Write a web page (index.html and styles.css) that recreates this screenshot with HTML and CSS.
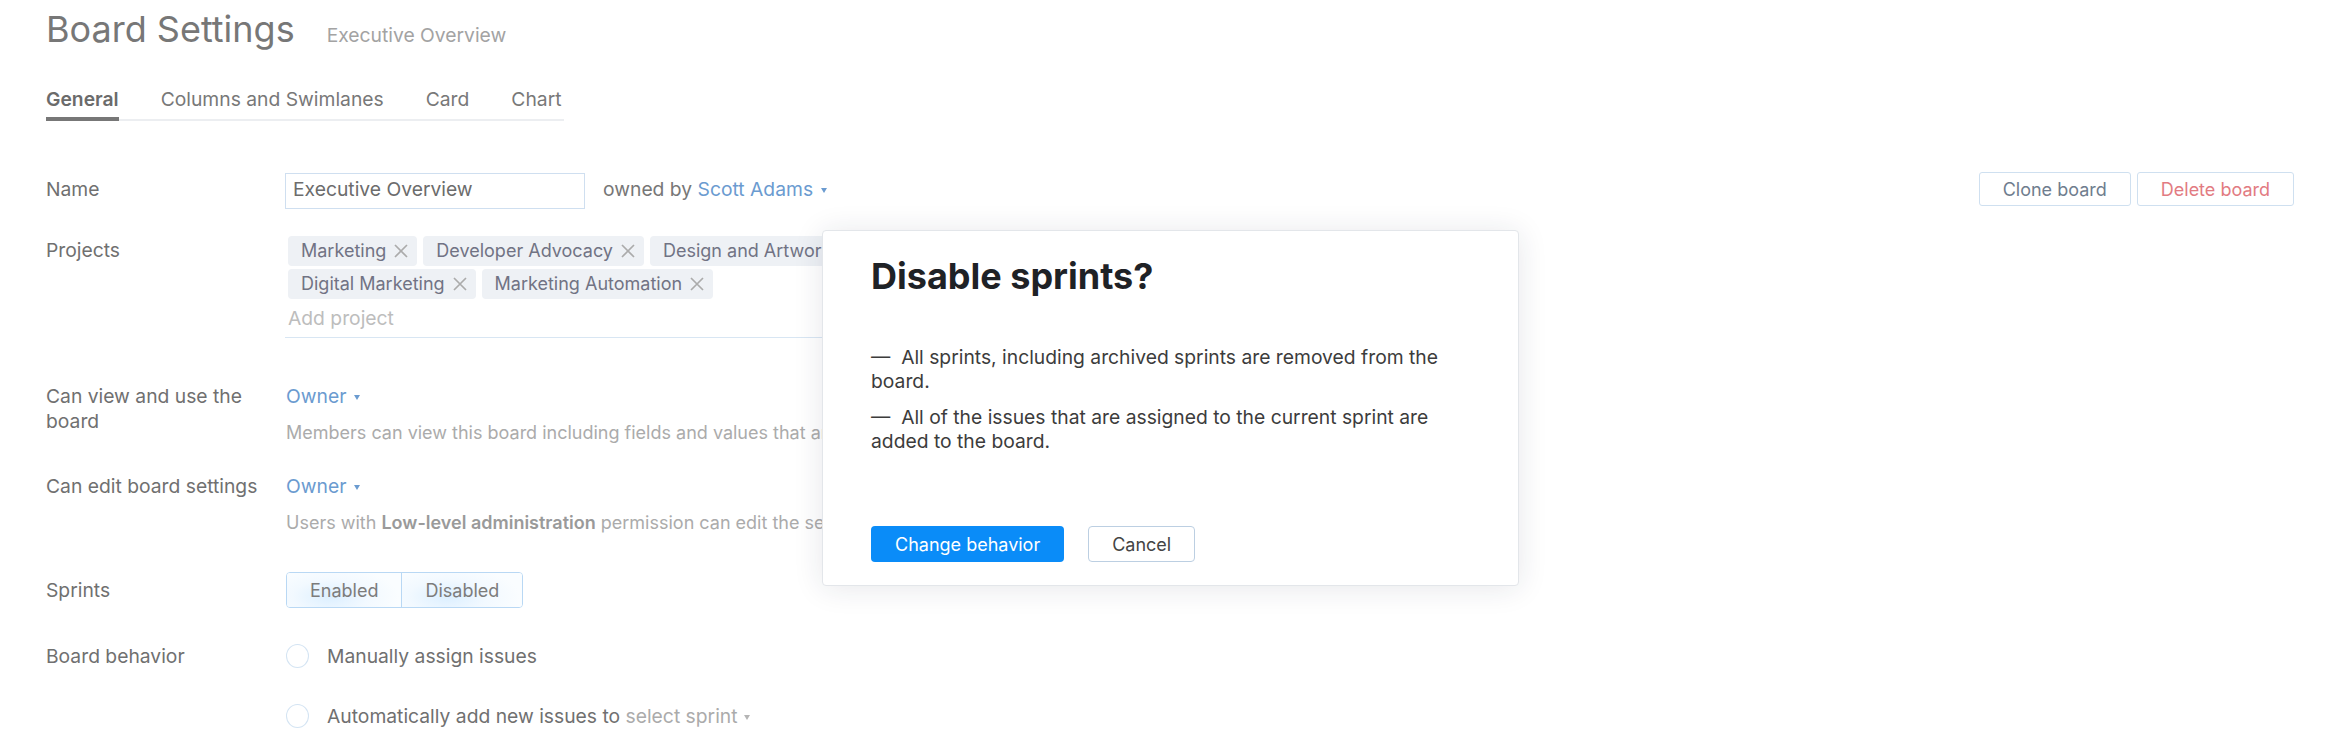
FILE: index.html
```html
<!DOCTYPE html>
<html lang="en">
<head>
<meta charset="utf-8">
<title>Board Settings</title>
<link rel="stylesheet" href="styles.css">
</head>
<body>
<div class="page">
  <header class="head">
    <h1 class="title">Board Settings</h1>
    <span class="subtitle">Executive Overview</span>
  </header>

  <nav class="tabs">
    <span class="tab tab-active">General</span>
    <span class="tab">Columns and Swimlanes</span>
    <span class="tab">Card</span>
    <span class="tab">Chart</span>
  </nav>

  <div class="form">
    <div class="row row-name">
      <div class="label">Name</div>
      <div class="value name-value">
        <input class="name-input" type="text" value="Executive Overview">
        <span class="owned">owned by <span class="link">Scott Adams<span class="caret"></span></span></span>
        <div class="actions">
          <button class="btn">Clone board</button>
          <button class="btn btn-danger">Delete board</button>
        </div>
      </div>
    </div>

    <div class="row row-projects">
      <div class="label">Projects</div>
      <div class="value">
        <div class="projects">
          <div class="chips">
            <span class="chip">Marketing<svg class="chip-x" viewBox="0 0 16 16"><path d="M2 2L14 14M14 2L2 14"/></svg></span>
            <span class="chip">Developer Advocacy<svg class="chip-x" viewBox="0 0 16 16"><path d="M2 2L14 14M14 2L2 14"/></svg></span>
            <span class="chip">Design and Artwork<svg class="chip-x" viewBox="0 0 16 16"><path d="M2 2L14 14M14 2L2 14"/></svg></span>
            <span class="chip">Digital Marketing<svg class="chip-x" viewBox="0 0 16 16"><path d="M2 2L14 14M14 2L2 14"/></svg></span>
            <span class="chip">Marketing Automation<svg class="chip-x" viewBox="0 0 16 16"><path d="M2 2L14 14M14 2L2 14"/></svg></span>
          </div>
          <div class="add-project">Add project</div>
        </div>
      </div>
    </div>

    <div class="row row-view">
      <div class="label">Can view and use the board</div>
      <div class="value">
        <div><span class="link">Owner<span class="caret"></span></span></div>
        <div class="hint">Members can view this board including fields and values that are</div>
      </div>
    </div>

    <div class="row row-edit">
      <div class="label">Can edit board settings</div>
      <div class="value">
        <div><span class="link">Owner<span class="caret"></span></span></div>
        <div class="hint">Users with <b>Low-level administration</b> permission can edit the settings for this board.</div>
      </div>
    </div>

    <div class="row row-sprints">
      <div class="label">Sprints</div>
      <div class="value">
        <div class="segmented">
          <button class="seg seg-first">Enabled</button>
          <button class="seg">Disabled</button>
        </div>
      </div>
    </div>

    <div class="row row-behavior">
      <div class="label">Board behavior</div>
      <div class="value options">
        <label class="option"><span class="radio"></span>Manually assign issues</label>
        <label class="option"><span class="radio"></span>Automatically add new issues to <span class="muted">select sprint<span class="caret caret-grey"></span></span></label>
      </div>
    </div>
  </div>

  <div class="dialog">
    <h2 class="dialog-title">Disable sprints?</h2>
    <div class="dialog-body">
      <p>—&nbsp; All sprints, including archived sprints are removed from the board.</p>
      <p>—&nbsp; All of the issues that are assigned to the current sprint are added to the board.</p>
    </div>
    <div class="dialog-actions">
      <button class="btn-primary">Change behavior</button>
      <button class="btn-cancel">Cancel</button>
    </div>
  </div>
</div>
</body>
</html>
```

FILE: styles.css
```css
* { box-sizing: border-box; }

body {
  margin: 0;
  background: #ffffff;
  font-family: Inter, "Noto Sans", "Liberation Sans", sans-serif;
  color: #707070;
}

.page {
  position: relative;
  height: 746px;
  overflow: hidden;
  padding: 7px 48px 0 46px;
}

/* Header */
.head {
  display: flex;
  align-items: baseline;
  gap: 32px;
}
.title {
  margin: 0;
  font-size: 36px;
  line-height: 44px;
  font-weight: 400;
  color: #777777;
}
.subtitle {
  font-size: 19.3px;
  color: #a3a3a3;
}

/* Tabs */
.tabs {
  display: inline-flex;
  gap: 42px;
  margin-top: 36px;
  padding-right: 2px;
  border-bottom: 2px solid #eceef1;
}
.tab {
  position: relative;
  font-size: 19.3px;
  line-height: 24px;
  padding-bottom: 8px;
  color: #787878;
}
.tab-active {
  font-weight: 600;
  color: #6b6b6b;
}
.tab-active::after {
  content: "";
  position: absolute;
  left: 0;
  right: 0;
  bottom: -2px;
  height: 4px;
  background: #777777;
}

/* Form */
.form {
  margin-top: 52px;
}
.row {
  display: grid;
  grid-template-columns: 240px 1fr;
  align-items: baseline;
  font-size: 19.3px;
  line-height: 25px;
}
.label {
  color: #707070;
  padding-right: 12px;
}
.row-projects { margin-top: 27px; }
.row-view { margin-top: 46px; }
.row-edit { margin-top: 29px; }
.row-sprints { margin-top: 37px; }
.row-behavior { margin-top: 36px; }

.name-value {
  display: flex;
  align-items: baseline;
}
.name-input {
  width: 300px;
  height: 36px;
  margin-left: -1px;
  padding: 0 7px 5px;
  border: 1px solid #cfdff0;
  border-radius: 0;
  font: inherit;
  color: #6c6c6c;
  outline: none;
}
.owned {
  margin-left: 18px;
  color: #777777;
}
.link {
  color: #6b9bd0;
}
.caret {
  display: inline-block;
  width: 0;
  height: 0;
  margin-left: 8px;
  vertical-align: 3px;
  border-left: 3.5px solid transparent;
  border-right: 3.5px solid transparent;
  border-top: 5px solid #6b9bd0;
}
.caret-grey {
  border-top-color: #b5b5b5;
  margin-left: 6px;
}
.actions {
  align-self: flex-start;
  margin-top: -1px;
  margin-left: auto;
  display: flex;
  gap: 6px;
}
.btn {
  height: 34px;
  padding: 0 23px;
  background: #ffffff;
  border: 1px solid #cfe0f0;
  border-radius: 3px;
  font: inherit;
  font-size: 18px;
  color: #6f7d8e;
}
.btn-danger {
  color: #e27b82;
}

/* Projects */
.projects {
  width: 600px;
  margin-left: -1px;
}
.chips {
  display: flex;
  flex-wrap: wrap;
  gap: 3px 6px;
  padding-left: 3px;
}
.chip {
  display: inline-flex;
  align-items: center;
  gap: 7px;
  height: 30px;
  padding: 0 8px 1px 13px;
  background: #eef1f5;
  border-radius: 4px;
  font-size: 18px;
  color: #717384;
}
.chip-x {
  width: 16px;
  height: 16px;
  fill: none;
  stroke: #ababab;
  stroke-width: 1.7;
}
.add-project {
  padding: 7px 3px 6px;
  line-height: 25px;
  color: #bdbdbd;
  border-bottom: 1px solid #d8e6f3;
}

.hint {
  margin-top: 11px;
  font-size: 18px;
  color: #ababab;
  white-space: nowrap;
}
.hint b {
  font-weight: 600;
  color: #9a9a9a;
}

/* Sprints segmented */
.segmented {
  display: inline-flex;
  border: 1px solid #b9d8f4;
  border-radius: 4px;
  overflow: hidden;
}
.seg {
  height: 34px;
  padding: 0 23px;
  border: 0;
  font: inherit;
  font-size: 18px;
  color: #7c7c7c;
  background: radial-gradient(ellipse 60% 90% at 38% 70%, #dcefff 0%, #f2f9ff 55%, #fafdff 100%);
}
.seg-first {
  border-right: 1px solid #b9d8f4;
}

/* Radios */
.options {
  display: flex;
  flex-direction: column;
  gap: 35px;
}
.option {
  display: block;
  color: #707070;
}
.radio {
  display: inline-block;
  width: 23px;
  height: 24px;
  margin-right: 18px;
  vertical-align: -5px;
  border: 1px solid #d4e4f3;
  border-radius: 50%;
  background: #fff;
}
.muted {
  color: #ababab;
}

/* Dialog */
.dialog {
  position: absolute;
  left: 822px;
  top: 230px;
  width: 697px;
  height: 356px;
  display: flex;
  flex-direction: column;
  padding: 23px 48px 23px 48px;
  background: #ffffff;
  border: 1px solid #e3e6ea;
  border-radius: 4px;
  box-shadow: 0 2px 30px rgba(30, 40, 60, 0.11);
}
.dialog-title {
  margin: 0;
  font-size: 36px;
  line-height: 44px;
  font-weight: 700;
  color: #1f2226;
}
.dialog-body {
  margin-top: 47px;
}
.dialog-body p {
  margin: 0 0 12px;
  font-size: 19.3px;
  line-height: 24px;
  color: #3c3c3c;
}
.dialog-actions {
  margin-top: auto;
  display: flex;
  gap: 24px;
}
.btn-primary {
  height: 36px;
  padding: 0 24px;
  border: 0;
  border-radius: 4px;
  background: #0a8cf8;
  color: #ffffff;
  font: inherit;
  font-size: 18px;
}
.btn-cancel {
  height: 36px;
  padding: 0 23px;
  background: #ffffff;
  border: 1px solid #bccfe2;
  border-radius: 4px;
  color: #444444;
  font: inherit;
  font-size: 18px;
}
```
